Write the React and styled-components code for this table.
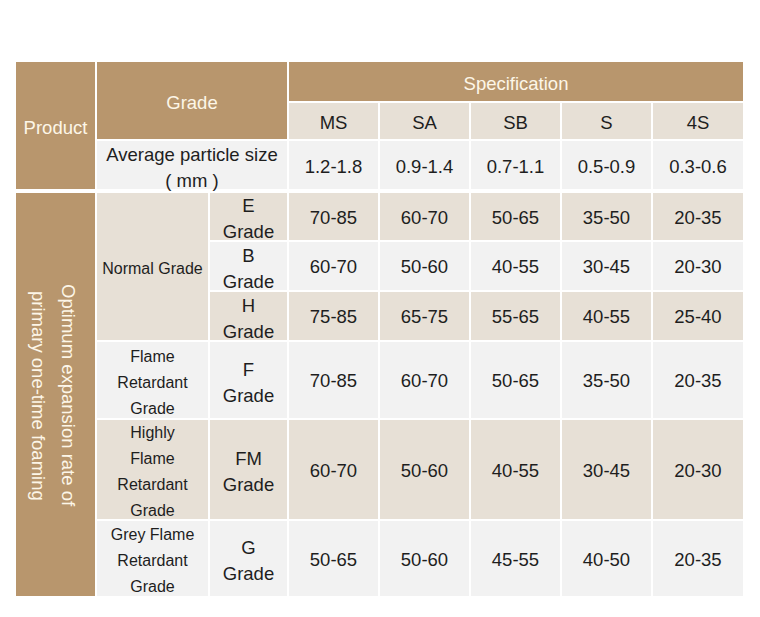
import React from "react";
import styled, { createGlobalStyle } from "styled-components";

const colors = {
  brown: "#b8966d",
  beige: "#e7e0d6",
  grey: "#f2f2f2",
  ink: "#1e1e1e",
  cream: "#fdf6e8",
};

const specs = ["MS", "SA", "SB", "S", "4S"];
const sizes = ["1.2-1.8", "0.9-1.4", "0.7-1.1", "0.5-0.9", "0.3-0.6"];

const grades = [
  {
    group: ["Normal Grade"],
    span: 3,
    grade: "E",
    tone: "beige",
    values: ["70-85", "60-70", "50-65", "35-50", "20-35"],
  },
  { grade: "B", tone: "grey", values: ["60-70", "50-60", "40-55", "30-45", "20-30"] },
  { grade: "H", tone: "beige", values: ["75-85", "65-75", "55-65", "40-55", "25-40"] },
  {
    group: ["Flame", "Retardant", "Grade"],
    grade: "F",
    tone: "grey",
    values: ["70-85", "60-70", "50-65", "35-50", "20-35"],
  },
  {
    group: ["Highly", "Flame", "Retardant", "Grade"],
    grade: "FM",
    tone: "beige",
    values: ["60-70", "50-60", "40-55", "30-45", "20-30"],
  },
  {
    group: ["Grey Flame", "Retardant", "Grade"],
    grade: "G",
    tone: "grey",
    values: ["50-65", "50-60", "45-55", "40-50", "20-35"],
  },
];

const GlobalStyle = createGlobalStyle`
  html, body {
    margin: 0;
    background: #ffffff;
  }
  body {
    font-family: "Liberation Sans", Arial, sans-serif;
  }
`;

const Page = styled.div`
  display: flex;
  flex-direction: column;
  gap: 4px;
  width: 727px;
  padding: 62px 0 0 16px;
`;

const Grid = styled.div`
  display: grid;
  grid-template-columns: 79px 111px 77px 89px 89px 89px 89px 90px;
  grid-template-rows: ${(p) => p.$rows};
  gap: 2px;
`;

const Cell = styled.div`
  display: flex;
  flex-direction: column;
  align-items: center;
  justify-content: center;
  text-align: center;
  white-space: nowrap;
  background: ${(p) => colors[p.$tone]};
  color: ${(p) => (p.$tone === "brown" ? colors.cream : colors.ink)};
  font-size: ${(p) => (p.$small ? 16 : 18.5)}px;
  line-height: 26px;
  grid-column: ${(p) => p.$col || "auto"};
  grid-row: ${(p) => p.$row || "auto"};
  padding-top: ${(p) => p.$nudge ?? 2}px;
`;

const VerticalLabel = styled.span`
  writing-mode: vertical-rl;
  line-height: 30px;
  margin-right: 6px;
`;

const Lines = ({ lines }) =>
  lines.map((line, i) => <span key={i}>{line}</span>);

const App = () => {
  return (
    <>
      <GlobalStyle />
      <Page>
        <Grid $rows="39px 36px 48px">
          <Cell $tone="brown" $row="1 / 4" $nudge={4}>
            Product
          </Cell>
          <Cell $tone="brown" $col="2 / 4" $row="1 / 3" $nudge={4}>
            Grade
          </Cell>
          <Cell $tone="brown" $col="4 / 9" $nudge={4}>
            Specification
          </Cell>
          {specs.map((s) => (
            <Cell key={s} $tone="beige" $nudge={4}>
              {s}
            </Cell>
          ))}
          <Cell $tone="grey" $col="span 2" $nudge={6}>
            <Lines lines={["Average particle size", "( mm )"]} />
          </Cell>
          {sizes.map((s) => (
            <Cell key={s} $tone="grey" $nudge={4}>
              {s}
            </Cell>
          ))}
        </Grid>

        <Grid $rows="47px 48px 48px 76px 99px 75px">
          <Cell $tone="brown" $row="1 / 7">
            <VerticalLabel>
              Optimum expansion rate of
              <br />
              primary one-time foaming
            </VerticalLabel>
          </Cell>
          {grades.map((g) => (
            <React.Fragment key={g.grade}>
              {g.group ? (
                <Cell
                  $tone={g.tone}
                  $small
                  $nudge={5}
                  $row={g.span ? `span ${g.span}` : "auto"}
                >
                  <Lines lines={g.group} />
                </Cell>
              ) : null}
              <Cell $tone={g.tone} $nudge={5}>
                <Lines lines={[g.grade, "Grade"]} />
              </Cell>
              {g.values.map((v, i) => (
                <Cell key={i} $tone={g.tone}>
                  {v}
                </Cell>
              ))}
            </React.Fragment>
          ))}
        </Grid>
      </Page>
    </>
  );
};

export default App;
